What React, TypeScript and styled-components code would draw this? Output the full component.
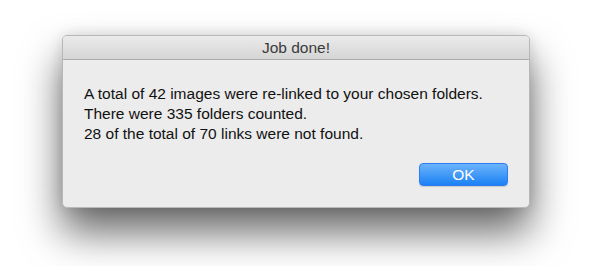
import React from "react";
import styled, { createGlobalStyle } from "styled-components";

const Global = createGlobalStyle`
  html, body { margin: 0; padding: 0; background: #ffffff; }
  body { font-family: "Liberation Sans", Arial, sans-serif; }
`;

const Page = styled.div`
  width: 590px;
  height: 266px;
  padding: 35px 0 0 62px;
  box-sizing: border-box;
  overflow: hidden;
`;

const Window = styled.div`
  width: 468px;
  height: 173px;
  box-sizing: border-box;
  border-radius: 5px;
  background: #ececec;
  border: 1px solid #b8b8b8;
  box-shadow: 0 24px 40px rgba(0, 0, 0, 0.6), 0 0 14px rgba(0, 0, 0, 0.12);
  display: flex;
  flex-direction: column;
  overflow: hidden;
`;

const TitleBar = styled.div`
  height: 24px;
  flex: none;
  box-sizing: border-box;
  background: linear-gradient(#ebebeb, #d5d5d5);
  border-bottom: 1px solid #acacac;
  display: flex;
  align-items: center;
  justify-content: center;
  font-size: 15.5px;
  color: #3a3a3a;
`;

const Body = styled.div`
  flex: 1;
  display: flex;
  flex-direction: column;
  justify-content: space-between;
  padding: 24px 21px 21px 21px;
`;

const Message = styled.p`
  margin: 0;
  font-size: 15.5px;
  line-height: 20px;
  color: #111;
`;

const Footer = styled.div`
  display: flex;
  justify-content: flex-end;
`;

const Button = styled.button`
  width: 89px;
  height: 23px;
  border-radius: 4px;
  border: 1px solid #2f7cf0;
  background: linear-gradient(#6cb3fa, #1b81f5);
  color: #ffffff;
  font-family: "Liberation Sans", Arial, sans-serif;
  font-size: 15.5px;
  line-height: 21px;
  padding: 0;
  box-shadow: 0 1px 1px rgba(0, 0, 0, 0.15);
`;

export default function App() {
  return (
    <>
      <Global />
      <Page>
        <Window>
          <TitleBar>Job done!</TitleBar>
          <Body>
            <Message>
              A total of 42 images were re-linked to your chosen folders.
              <br />
              There were 335 folders counted.
              <br />
              28 of the total of 70 links were not found.
            </Message>
            <Footer>
              <Button>OK</Button>
            </Footer>
          </Body>
        </Window>
      </Page>
    </>
  );
}
